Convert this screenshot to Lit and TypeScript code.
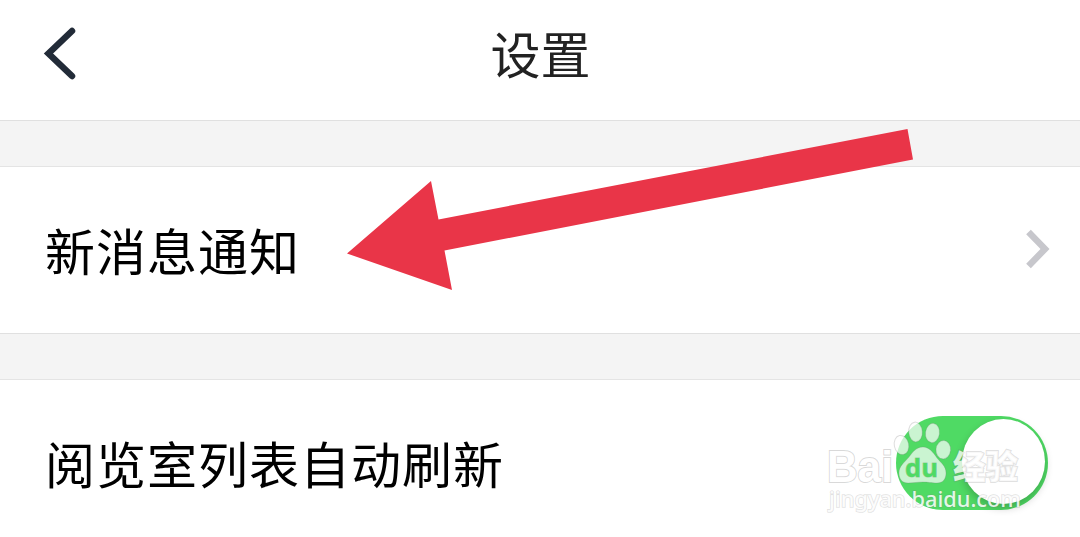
import { html, css, svg, LitElement } from 'lit';
import { customElement, property } from 'lit/decorators.js';

const FONT = css`"Noto Sans CJK SC", "Noto Sans", sans-serif`;

@customElement('toggle-switch')
export class ToggleSwitch extends LitElement {
  static styles = css`
    :host {
      display: flex;
      justify-content: flex-end;
      align-items: flex-start;
      box-sizing: border-box;
      width: 152px;
      height: 94px;
      padding: 3px;
      border-radius: 47px;
      background: #dddddd;
    }
    :host([checked]) {
      background: #4fda64;
    }
    .knob {
      width: 83px;
      height: 85px;
      border-radius: 50%;
      background: #ffffff;
      box-shadow: 0 4px 8px rgba(0, 0, 0, 0.22);
    }
  `;

  @property({ type: Boolean, reflect: true }) checked = false;

  render() {
    return html`<div class="knob"></div>`;
  }
}

@customElement('site-watermark')
export class SiteWatermark extends LitElement {
  static styles = css`
    :host {
      display: block;
      pointer-events: none;
    }
    svg {
      display: block;
    }
    text {
      stroke: rgba(120, 120, 120, 0.28);
      stroke-width: 2px;
      paint-order: stroke;
    }
    .brand {
      font: 700 44px "Liberation Sans", sans-serif;
      fill: #ffffff;
    }
    .cn {
      font: 900 33px ${FONT};
      fill: rgba(255, 255, 255, 0.8);
      stroke: rgba(120, 120, 120, 0.22);
    }
    .url {
      font: 500 22.5px "Noto Sans", sans-serif;
      stroke-width: 1.6px;
      fill: rgba(255, 255, 255, 0.85);
      stroke: rgba(120, 120, 120, 0.22);
    }
    .paw {
      fill: rgba(255, 255, 255, 0.7);
      stroke: rgba(120, 120, 120, 0.25);
      stroke-width: 1px;
    }
    .du {
      font: 700 25px "Open Sans", sans-serif;
      fill: #4fda64;
      stroke: rgba(70, 130, 80, 0.35);
      stroke-width: 1px;
    }
  `;

  render() {
    return html`
      <svg width="204" height="100" viewBox="0 0 204 100">
        <text class="brand" x="1" y="66.5" textLength="66" lengthAdjust="spacingAndGlyphs">Bai</text>
        ${svg`
          <g class="paw">
            <ellipse cx="75.5" cy="30" rx="7.2" ry="9.7" transform="rotate(-12 75.5 30)" />
            <ellipse cx="89.5" cy="17" rx="6.8" ry="9.9" transform="rotate(-5 89.5 17)" />
            <ellipse cx="106.5" cy="18" rx="7" ry="9.7" transform="rotate(8 106.5 18)" />
            <ellipse cx="117.3" cy="34.7" rx="7.3" ry="9.2" transform="rotate(5 117.3 34.7)" />
            <path d="M97 32C90 32 86 38 83 42C78 48 73 51 73 58C73 64 76 68 82 68C88 68 91 67 97 67C102 67 105 68 111 68C117 68 120 64 120 58C120 51 115 48 111 43C107 37 103 32 97 32Z" />
          </g>
        `}
        <text class="du" x="79" y="61.5" textLength="33" lengthAdjust="spacingAndGlyphs">du</text>
        <text class="cn" x="127" y="64" textLength="65" lengthAdjust="spacingAndGlyphs">经验</text>
        <text class="url" x="3" y="92" textLength="192" lengthAdjust="spacingAndGlyphs">jingyan.baidu.com</text>
      </svg>
    `;
  }
}

@customElement('app-root')
export class AppRoot extends LitElement {
  static styles = css`
    :host {
      display: flex;
      flex-direction: column;
      position: relative;
      width: 1080px;
      height: 537px;
      overflow: hidden;
      background: #ffffff;
      color: #000000;
      font-family: ${FONT};
    }
    .header {
      flex: none;
      display: grid;
      grid-template-columns: 120px 1fr 120px;
      align-items: center;
      height: 120px;
      padding-bottom: 16px;
      box-sizing: border-box;
    }
    .back {
      width: 40px;
      height: 60px;
      margin: 1px 0 0 40px;
      fill: none;
      stroke: #222b38;
      stroke-width: 6.5px;
      stroke-linecap: round;
      stroke-linejoin: miter;
    }
    .title {
      margin: 0;
      padding-left: 1px;
      text-align: center;
      font-size: 50px;
      font-weight: 400;
      line-height: 72px;
      color: #222222;
    }
    .gap {
      flex: none;
      box-sizing: border-box;
      height: 47px;
      background: #f4f4f4;
      border-top: 1px solid #e0e0e0;
      border-bottom: 1px solid #e4e4e4;
    }
    .row {
      flex: none;
      display: flex;
      align-items: center;
      justify-content: space-between;
      box-sizing: border-box;
      height: 166px;
      padding: 0 32px 0 45px;
    }
    .label {
      padding-bottom: 3px;
      font-size: 50px;
      letter-spacing: 1px;
      line-height: 72px;
    }
    .chevron {
      width: 24px;
      height: 40px;
      margin: 0 -2px 2px 0;
      fill: none;
      stroke: #c7c7cc;
      stroke-width: 6.5px;
    }
    .arrow {
      position: absolute;
      left: 0;
      top: 0;
      fill: #e93548;
      pointer-events: none;
    }
    .mark {
      position: absolute;
      left: 826px;
      top: 415px;
    }
  `;

  render() {
    return html`
      <header class="header">
        <svg class="back" viewBox="0 0 40 60">
          <path d="M32 8L8.5 30.5L32 53" />
        </svg>
        <h1 class="title">设置</h1>
      </header>
      <div class="gap"></div>
      <div class="row">
        <span class="label">新消息通知</span>
        <svg class="chevron" viewBox="0 0 24 40">
          <path d="M2.5 3L19 20L2.5 37" />
        </svg>
      </div>
      <div class="gap"></div>
      <div class="row">
        <span class="label">阅览室列表自动刷新</span>
        <toggle-switch checked></toggle-switch>
      </div>
      <svg class="arrow" width="1080" height="300" viewBox="0 0 1080 300">
        <path d="M347 253.5L431 181L438.5 219.5L907.5 129L913 159.5L444.5 250.5L452 290Z" />
      </svg>
      <site-watermark class="mark"></site-watermark>
    `;
  }
}
